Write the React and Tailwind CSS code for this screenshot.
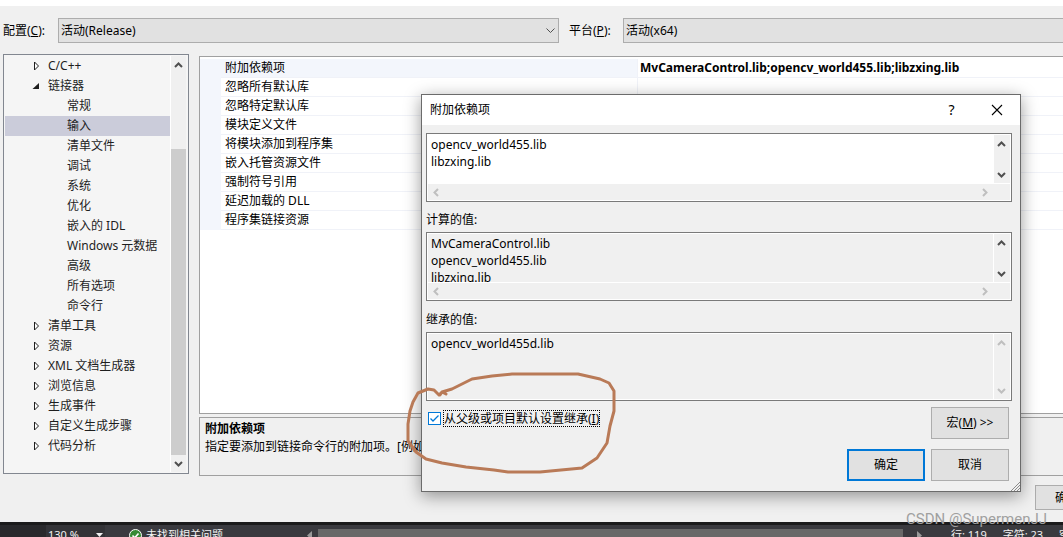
import React, { useState } from "react";

const treeItems = [
  { label: "C/C++", level: 0, state: "closed" },
  { label: "链接器", level: 0, state: "open" },
  { label: "常规", level: 1 },
  { label: "输入", level: 1 },
  { label: "清单文件", level: 1 },
  { label: "调试", level: 1 },
  { label: "系统", level: 1 },
  { label: "优化", level: 1 },
  { label: "嵌入的 IDL", level: 1 },
  { label: "Windows 元数据", level: 1 },
  { label: "高级", level: 1 },
  { label: "所有选项", level: 1 },
  { label: "命令行", level: 1 },
  { label: "清单工具", level: 0, state: "closed" },
  { label: "资源", level: 0, state: "closed" },
  { label: "XML 文档生成器", level: 0, state: "closed" },
  { label: "浏览信息", level: 0, state: "closed" },
  { label: "生成事件", level: 0, state: "closed" },
  { label: "自定义生成步骤", level: 0, state: "closed" },
  { label: "代码分析", level: 0, state: "closed" },
];

const properties = [
  { name: "附加依赖项", value: "MvCameraControl.lib;opencv_world455.lib;libzxing.lib" },
  { name: "忽略所有默认库", value: "" },
  { name: "忽略特定默认库", value: "" },
  { name: "模块定义文件", value: "" },
  { name: "将模块添加到程序集", value: "" },
  { name: "嵌入托管资源文件", value: "" },
  { name: "强制符号引用", value: "" },
  { name: "延迟加载的 DLL", value: "" },
  { name: "程序集链接资源", value: "" },
];

const chevronPaths = {
  up: "M1 6 L4.5 2.5 L8 6",
  down: "M1 3 L4.5 6.5 L8 3",
  left: "M6 1 L2.5 4.5 L6 8",
  right: "M3 1 L6.5 4.5 L3 8",
};

const Chevron = ({ dir, muted }) => (
  <svg width="9" height="9" viewBox="0 0 9 9" fill="none" stroke={muted ? "#bfbfbf" : "#505050"} strokeWidth="2">
    <path d={chevronPaths[dir]} />
  </svg>
);

const TreeArrow = ({ state }) => {
  if (state === "open") {
    return (
      <svg width="8" height="8" viewBox="0 0 8 8">
        <path d="M7 1 V7 H0.5 Z" fill="#1e1e1e" />
      </svg>
    );
  }
  return (
    <svg width="8" height="10" viewBox="0 0 8 10">
      <path d="M2.5 1 V9 L6.5 5 Z" fill="#fff" stroke="#1e1e1e" />
    </svg>
  );
};

const Tree = () => {
  const [selected, setSelected] = useState("输入");

  return (
    <nav className="mb-0.5 flex w-[186px] shrink-0 border border-[#828790] bg-[#f5f5f5] py-px pr-0.5 pl-px">
      <ul className="flex-1">
        {treeItems.map((item) => (
          <li key={item.label}>
            <button
              type="button"
              onClick={() => setSelected(item.label)}
              className={`flex h-5 w-full items-center whitespace-nowrap text-left text-[#1e1e1e] ${
                item.level === 0 ? "pl-[27px]" : "pl-[62px]"
              } ${selected === item.label ? "bg-[#cbccda]" : ""}`}
            >
              {item.level === 0 && (
                <span className="flex w-4 shrink-0 items-center">
                  <TreeArrow state={item.state} />
                </span>
              )}
              {item.label}
            </button>
          </li>
        ))}
      </ul>
      <div className="flex w-4 flex-col items-center border-l border-white bg-[#f0f0f0]">
        <div className="flex h-[18px] items-center">
          <Chevron dir="up" />
        </div>
        <div className="mt-[75px] w-full flex-1 bg-[#cdcdcd]" />
        <div className="flex h-[17px] items-center">
          <Chevron dir="down" />
        </div>
      </div>
    </nav>
  );
};

const PropertyGrid = () => (
  <div className="flex-1 overflow-hidden border border-r-0 border-[#a0a0a0] bg-white pt-0.5">
    <table className="w-full table-fixed border-separate border-spacing-0">
      <tbody>
        {properties.map((prop, i) => (
          <tr key={prop.name} className="h-[19px] leading-[18px]">
            <td className="w-[21px] bg-[#f3f6fc] p-0" />
            <th
              scope="row"
              className={`w-[417px] border-r border-b border-[#f0f2f8] p-0 pl-1 text-left font-normal ${
                i === 0 ? "bg-[#f3f6fc]" : ""
              }`}
            >
              {prop.name}
            </th>
            <td className="border-b border-[#f0f2f8] p-0 pl-0.5 font-bold whitespace-nowrap">{prop.value}</td>
          </tr>
        ))}
      </tbody>
    </table>
  </div>
);

const ListBox = ({ id, label, lines, horizontal, readOnly, disabled }) => (
  <div className="flex h-[69px] flex-col border border-[#7a7a7a] bg-white p-px">
    <div className="flex min-h-0 flex-1">
      <textarea
        id={id}
        aria-label={label}
        defaultValue={lines.join("\n")}
        readOnly={readOnly}
        className={`min-w-0 flex-1 resize-none overflow-hidden px-[3px] pt-px leading-[17px] whitespace-pre outline-none ${
          readOnly ? "bg-[#f0f0f0]" : "bg-white"
        }`}
      />
      <div className="ml-px flex w-4 flex-col items-center justify-between bg-[#f0f0f0] pt-[5px] pr-px pb-1">
        <Chevron dir="up" muted={disabled} />
        <Chevron dir="down" muted={disabled} />
      </div>
    </div>
    {horizontal && (
      <div className="mt-px flex h-4 shrink-0 items-center justify-between bg-[#f0f0f0] pr-[21px] pl-1">
        <Chevron dir="left" muted />
        <Chevron dir="right" muted />
      </div>
    )}
  </div>
);

const DependenciesDialog = () => (
  <div
    role="dialog"
    aria-label="附加依赖项"
    className="absolute top-[94px] left-[421px] w-[600px] border border-[#6b6b6b] bg-[#f0f0f0] shadow-[0_4px_16px_rgba(0,0,0,0.4)]"
  >
    <div className="flex h-[30px] items-center bg-white pl-2">
      <h2 className="flex-1">附加依赖项</h2>
      <button type="button" className="w-[45px] text-sm">
        ?
      </button>
      <button type="button" aria-label="关闭" className="flex w-[46px] justify-center">
        <svg width="12" height="12" viewBox="0 0 12 12" stroke="#000" strokeWidth="1.1">
          <path d="M1 1 L11 11 M11 1 L1 11" />
        </svg>
      </button>
    </div>

    <div className="pt-2 pr-2 pb-2.5 pl-1">
      <ListBox id="deps" label="附加依赖项" lines={["opencv_world455.lib", "libzxing.lib"]} horizontal />
      <label htmlFor="computed" className="flex h-[30px] items-center pt-1.5">
        计算的值:
      </label>
      <ListBox
        id="computed"
        lines={["MvCameraControl.lib", "opencv_world455.lib", "libzxing.lib"]}
        horizontal
        readOnly
      />
      <label htmlFor="inherited" className="flex h-[31px] items-center pt-1.5">
        继承的值:
      </label>
      <ListBox id="inherited" lines={["opencv_world455d.lib"]} readOnly disabled />

      <div className="mt-1.5 flex items-start justify-between pr-[3px] pl-0.5">
        <label className="flex items-center gap-0.5 pt-[3px]">
          <span className="relative flex">
            <input
              type="checkbox"
              defaultChecked
              className="peer size-[13px] appearance-none border border-[#0078d7] bg-white"
            />
            <svg
              className="pointer-events-none absolute inset-0 hidden peer-checked:block"
              width="13"
              height="13"
              viewBox="0 0 13 13"
              fill="none"
              stroke="#0078d7"
              strokeWidth="1.3"
            >
              <path d="M2.5 6.5 L5 9 L10.5 3.5" />
            </svg>
          </span>
          <span className="border border-dotted border-black leading-[15px]">
            从父级或项目默认设置继承(<u>I</u>)
          </span>
        </label>
        <button type="button" className="h-8 w-[78px] border border-[#adadad] bg-[#e1e1e1]">
          宏(<u>M</u>) &gt;&gt;
        </button>
      </div>
      <div className="mt-2.5 flex justify-end gap-1.5 pr-[3px]">
        <button type="button" className="h-8 w-[78px] border-2 border-[#0078d7] bg-[#e1e1e1]">
          确定
        </button>
        <button type="button" className="h-8 w-[78px] border border-[#adadad] bg-[#e1e1e1]">
          取消
        </button>
      </div>
    </div>

    <svg className="absolute right-0 bottom-0" width="9" height="9" viewBox="0 0 9 9" stroke="#8c8c8c">
      <path d="M0 9 L9 0 M3 9 L9 3 M6 9 L9 6" />
    </svg>
  </div>
);

// hand drawn marker loop round the inherit checkbox
const MarkerLoop = () => (
  <svg
    className="pointer-events-none absolute top-[368px] left-[404px]"
    width="214"
    height="108"
    viewBox="0 0 214 108"
    fill="none"
    stroke="#b97a57"
    strokeWidth="3"
    strokeLinejoin="round"
    strokeLinecap="round"
  >
    <path d="M42 26 L38 24 L35 27 L30 22 L24 21 L14 25 L9 34 L6 43 L4 56 L4 73 L12 84 L22 91 L38 95 L62 99 L90 102 L104 104 L136 104 L178 100 L193 90 L203 75 L206 58 L210 43 L210 23 L205 15 L196 11 L174 6 L108 6 L88 8 L68 11 L54 18 L48 21 L38 24 L36 27" />
  </svg>
);

const StatusBar = () => (
  <footer className="flex h-[15px] shrink-0 overflow-hidden border-t-[3px] border-[#1b1b1c] bg-[#3a3a3f] text-[11px] text-[#f1f1f1]">
    <div className="w-[46px] shrink-0 bg-[#29292c]" />
    <button type="button" className="flex h-5 w-[59px] shrink-0 items-center justify-between bg-[#333337] pr-0.5 pl-0.5">
      130 %
      <svg width="7" height="4" viewBox="0 0 7 4">
        <path d="M0 0 H7 L3.5 4 Z" fill="#f1f1f1" />
      </svg>
    </button>
    <div className="flex h-5 w-[200px] shrink-0 items-center gap-1 pl-6">
      <svg width="13" height="13" viewBox="0 0 13 13">
        <circle cx="6.5" cy="6.5" r="6" fill="#388a34" stroke="#fff" />
        <path d="M3.5 6.5 L5.7 8.8 L9.5 4.5" fill="none" stroke="#fff" strokeWidth="1.6" />
      </svg>
      未找到相关问题
    </div>
    <svg className="mt-1.5 shrink-0" width="13" height="9" viewBox="0 0 13 9">
      <path d="M7 0 V9 L2 4.5 Z" fill="#999" />
    </svg>
    <div className="mt-1 h-4 flex-1 bg-[#686868]" />
    <svg className="mt-1.5 mr-7 ml-3.5 shrink-0" width="6" height="9" viewBox="0 0 6 9">
      <path d="M0 0 V9 L5 4.5 Z" fill="#999" />
    </svg>
    <div className="flex h-5 w-[112px] shrink-0 items-center gap-4 overflow-hidden whitespace-nowrap">
      <span>行: 119</span>
      <span>字符: 23</span>
      <span>空格</span>
    </div>
  </footer>
);

const App = () => {
  return (
    <div className="relative flex h-screen flex-col overflow-hidden bg-[#f0f0f0] font-['Noto_Sans','Noto_Sans_CJK_SC',sans-serif] text-xs text-black">
      <div className="h-1.5 shrink-0 bg-white" />

      <div className="flex shrink-0 items-center pt-3 pl-[3px]">
        <label htmlFor="config" className="w-[55px]">
          配置(<u>C</u>):
        </label>
        <div className="relative">
          <select
            id="config"
            className="h-[25px] w-[501px] appearance-none border border-[#adadad] bg-[#e1e1e1] pl-0.5"
          >
            <option>活动(Release)</option>
          </select>
          <svg
            className="pointer-events-none absolute top-2.5 right-1"
            width="9"
            height="6"
            viewBox="0 0 9 6"
            fill="none"
            stroke="#505050"
          >
            <path d="M0.5 0.5 L4.5 4.5 L8.5 0.5" />
          </svg>
        </div>
        <label htmlFor="platform" className="ml-2.5 w-[54px]">
          平台(<u>P</u>):
        </label>
        <select
          id="platform"
          className="h-[25px] flex-1 appearance-none border border-r-0 border-[#adadad] bg-[#e1e1e1] pl-0.5"
        >
          <option>活动(x64)</option>
        </select>
      </div>

      <main className="mt-[11px] flex min-h-0 flex-1 gap-2.5 pl-[3px]">
        <Tree />
        <div className="flex min-w-0 flex-1 flex-col gap-[3px] pt-0.5">
          <PropertyGrid />
          <section className="h-[59px] shrink-0 border border-r-0 border-[#a0a0a0] px-[5px] pt-0.5 leading-[18px]">
            <h3 className="font-bold">附加依赖项</h3>
            <p className="whitespace-nowrap">指定要添加到链接命令行的附加项。[例如 kernel32.lib]</p>
          </section>
        </div>
      </main>

      <div className="flex shrink-0 justify-end pt-[9px] pb-3">
        <button type="button" className="-mr-9 h-[25px] w-16 border border-[#adadad] bg-[#e1e1e1]">
          确定
        </button>
      </div>

      <StatusBar />
      <DependenciesDialog />
      <MarkerLoop />
      <div className="pointer-events-none absolute right-4 bottom-2 font-[Roboto,sans-serif] text-[15px] leading-5 text-[#a0a0a0]">
        CSDN @SupermenJJ
      </div>
    </div>
  );
};

export default App;
